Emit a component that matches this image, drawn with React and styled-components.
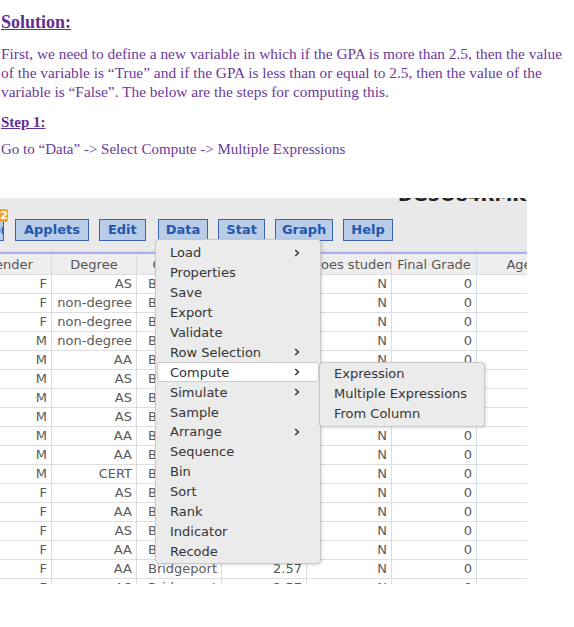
import { createGlobalStyle, styled } from "styled-components";

const GlobalStyle = createGlobalStyle`
  body {
    margin: 0;
    background: #ffffff;
  }
`;

const Page = styled.div`
  width: 574px;
  height: 627px;
  overflow: hidden;
`;

const Doc = styled.div`
  padding: 11px 0 0 1px;
  font-family: "Liberation Serif", "DejaVu Serif", serif;
  color: #6a3a9c;
`;

const Heading = styled.div`
  font-size: ${(p) => p.size}px;
  line-height: ${(p) => p.lh}px;
  font-weight: bold;
  text-decoration: underline;
  margin-top: ${(p) => p.mt}px;
  color: #5f2f94;
`;

const Para = styled.p`
  margin: ${(p) => p.mt}px 0 0 0;
  font-size: ${(p) => p.size || 15.4}px;
  line-height: 19px;
  white-space: nowrap;
`;

const Shot = styled.div`
  margin-top: 39px;
  width: 527px;
  height: 386px;
  overflow: hidden;
  position: relative;
  background: #e9e9e9;
  font-family: "DejaVu Sans", Verdana, sans-serif;
`;

const TitleStrip = styled.div`
  height: 7px;
  overflow: hidden;
  white-space: nowrap;
  padding-left: 398px;
`;

const TitleText = styled.div`
  font-size: 18px;
  font-weight: bold;
  line-height: 18px;
  margin-top: -12px;
  color: #222;
`;

const Toolbar = styled.div`
  position: relative;
  display: flex;
  align-items: center;
  height: 46px;
  padding-top: 3px;
  box-sizing: border-box;
`;

const Badge = styled.div`
  position: absolute;
  left: 0;
  top: 4px;
  width: 8px;
  height: 13px;
  background: #f3a325;
  color: #fff;
  font-size: 11px;
  font-weight: bold;
  line-height: 13px;
  text-align: center;
  border-radius: 0 2px 2px 0;
  z-index: 2;
`;

const ToolButton = styled.div`
  flex: none;
  height: 22px;
  box-sizing: border-box;
  padding: 0 ${(p) => p.px}px;
  margin-left: ${(p) => p.ml}px;
  background: #b9cde8;
  border: 1.5px solid #3a62b3;
  color: #2457ad;
  font-size: 13px;
  font-weight: bold;
  line-height: 19px;
  white-space: nowrap;
`;

const EdgeButton = styled(ToolButton)`
  width: 30px;
  overflow: hidden;
`;

const Rule = styled.div`
  height: 3px;
  background: #aaaaf0;
  border-top: 1px solid #d8d8f4;
  box-sizing: border-box;
`;

const Table = styled.div`
  margin-left: -33px;
  background: #ffffff;
`;

const Row = styled.div`
  display: grid;
  grid-template-columns: 85px 85px 85px 85px 85px 85px 85px;
  height: 19px;
  border-bottom: 1px solid #dedede;
  box-sizing: border-box;
  background: #ffffff;
  font-size: 13px;
  line-height: 18px;
  color: #5a5a5a;
`;

const HeadRow = styled(Row)`
  height: 21px;
  line-height: 21px;
  background: #eeeeee;
  color: #555;
`;

const Cell = styled.div`
  padding: 0 4px;
  border-right: 1px solid ${(p) => (p.blue ? "#d3deea" : "#dcdcdc")};
  text-align: ${(p) => p.align || "right"};
  white-space: nowrap;
  overflow: hidden;
`;

const Menu = styled.div`
  position: absolute;
  left: ${(p) => p.x}px;
  top: ${(p) => p.y}px;
  width: ${(p) => p.w}px;
  box-sizing: border-box;
  padding: ${(p) => p.pt}px 0 2px 0;
  background: #ebebeb;
  border: 1px solid #c9c9c9;
  border-radius: 4px;
  box-shadow: 1px 1px 3px rgba(0, 0, 0, 0.15);
  z-index: 3;
`;

const Item = styled.div`
  display: flex;
  align-items: center;
  justify-content: space-between;
  height: 19.9px;
  box-sizing: border-box;
  margin: 0 1px;
  padding: 0 18px 0 12px;
  font-size: 13px;
  color: #353535;
  white-space: nowrap;
  border-radius: 3px;
  background: ${(p) => (p.active ? "#ffffff" : "transparent")};
  border: 1px solid ${(p) => (p.active ? "#cfcfcf" : "transparent")};
`;

const Chevron = () => (
  <svg width="6" height="8" viewBox="0 0 6 8">
    <path d="M1.2 1 L4.4 4 L1.2 7" fill="none" stroke="#333" strokeWidth="1.5" />
  </svg>
);

const rows = [
  ["F", "AS", "Bridgeport", "3.12", "N", "0"],
  ["F", "non-degree", "Bridgeport", "2.80", "N", "0"],
  ["F", "non-degree", "Bridgeport", "3.40", "N", "0"],
  ["M", "non-degree", "Bridgeport", "2.10", "N", "0"],
  ["M", "AA", "Bridgeport", "2.95", "N", "0"],
  ["M", "AS", "Bridgeport", "3.05", "N", "0"],
  ["M", "AS", "Bridgeport", "2.33", "N", "0"],
  ["M", "AS", "Bridgeport", "3.60", "N", "0"],
  ["M", "AA", "Bridgeport", "2.70", "N", "0"],
  ["M", "AA", "Bridgeport", "2.45", "N", "0"],
  ["M", "CERT", "Bridgeport", "3.00", "N", "0"],
  ["F", "AS", "Bridgeport", "2.88", "N", "0"],
  ["F", "AA", "Bridgeport", "3.25", "N", "0"],
  ["F", "AS", "Bridgeport", "2.61", "N", "0"],
  ["F", "AA", "Bridgeport", "3.90", "N", "0"],
  ["F", "AA", "Bridgeport", "2.57", "N", "0"],
  ["F", "AS", "Bridgeport", "2.57", "N", "0"],
];

const dataMenu = [
  ["Load", true],
  ["Properties"],
  ["Save"],
  ["Export"],
  ["Validate"],
  ["Row Selection", true],
  ["Compute", true, true],
  ["Simulate", true],
  ["Sample"],
  ["Arrange", true],
  ["Sequence"],
  ["Bin"],
  ["Sort"],
  ["Rank"],
  ["Indicator"],
  ["Recode"],
];

const buttons = [
  ["Applets", 11, 8],
  ["Edit", 10, 8],
  ["Data", 12, 7],
  ["Stat", 10, 7],
  ["Graph", 10, 6],
  ["Help", 10, 7],
];

export default function App() {
  return (
    <Page>
      <GlobalStyle />
      <Doc>
        <Heading size={18} lh={22} mt={0}>Solution:</Heading>
        <Para mt={11}>
          First, we need to define a new variable in which if the GPA is more than 2.5, then the value
          <br />
          of the variable is “True” and if the GPA is less than or equal to 2.5, then the value of the
          <br />
          variable is “False”. The below are the steps for computing this.
        </Para>
        <Heading size={15} lh={20} mt={11}>Step 1:</Heading>
        <Para mt={8} size={15}>Go to “Data” -&gt; Select Compute -&gt; Multiple Expressions</Para>
      </Doc>

      <Shot>
        <TitleStrip>
          <TitleText>DG5O84RMKU</TitleText>
        </TitleStrip>
        <Toolbar>
          <Badge>2</Badge>
          <EdgeButton ml={-26} px={6}>Home</EdgeButton>
          {buttons.map(([label, ml, px]) => (
            <ToolButton key={label} ml={ml} px={px}>
              {label}
            </ToolButton>
          ))}
        </Toolbar>
        <Rule />
        <Table>
          <HeadRow>
            <Cell align="center">Gender</Cell>
            <Cell align="center">Degree</Cell>
            <Cell align="center">Campus</Cell>
            <Cell align="center">GPA</Cell>
            <Cell align="left" blue>Does student work?</Cell>
            <Cell align="center" blue>Final Grade</Cell>
            <Cell align="center">Age</Cell>
          </HeadRow>
          {rows.map((r, i) => (
            <Row key={i}>
              <Cell>{r[0]}</Cell>
              <Cell>{r[1]}</Cell>
              <Cell>{r[2]}</Cell>
              <Cell>{r[3]}</Cell>
              <Cell blue>{r[4]}</Cell>
              <Cell blue>{r[5]}</Cell>
              <Cell />
            </Row>
          ))}
        </Table>

        <Menu x={155} y={41} w={166} pt={3}>
          {dataMenu.map(([label, sub, active]) => (
            <Item key={label} active={active}>
              <span>{label}</span>
              {sub && <Chevron />}
            </Item>
          ))}
        </Menu>
        <Menu x={319} y={164} w={166} pt={1}>
          <Item>Expression</Item>
          <Item>Multiple Expressions</Item>
          <Item>From Column</Item>
        </Menu>
      </Shot>
    </Page>
  );
}
